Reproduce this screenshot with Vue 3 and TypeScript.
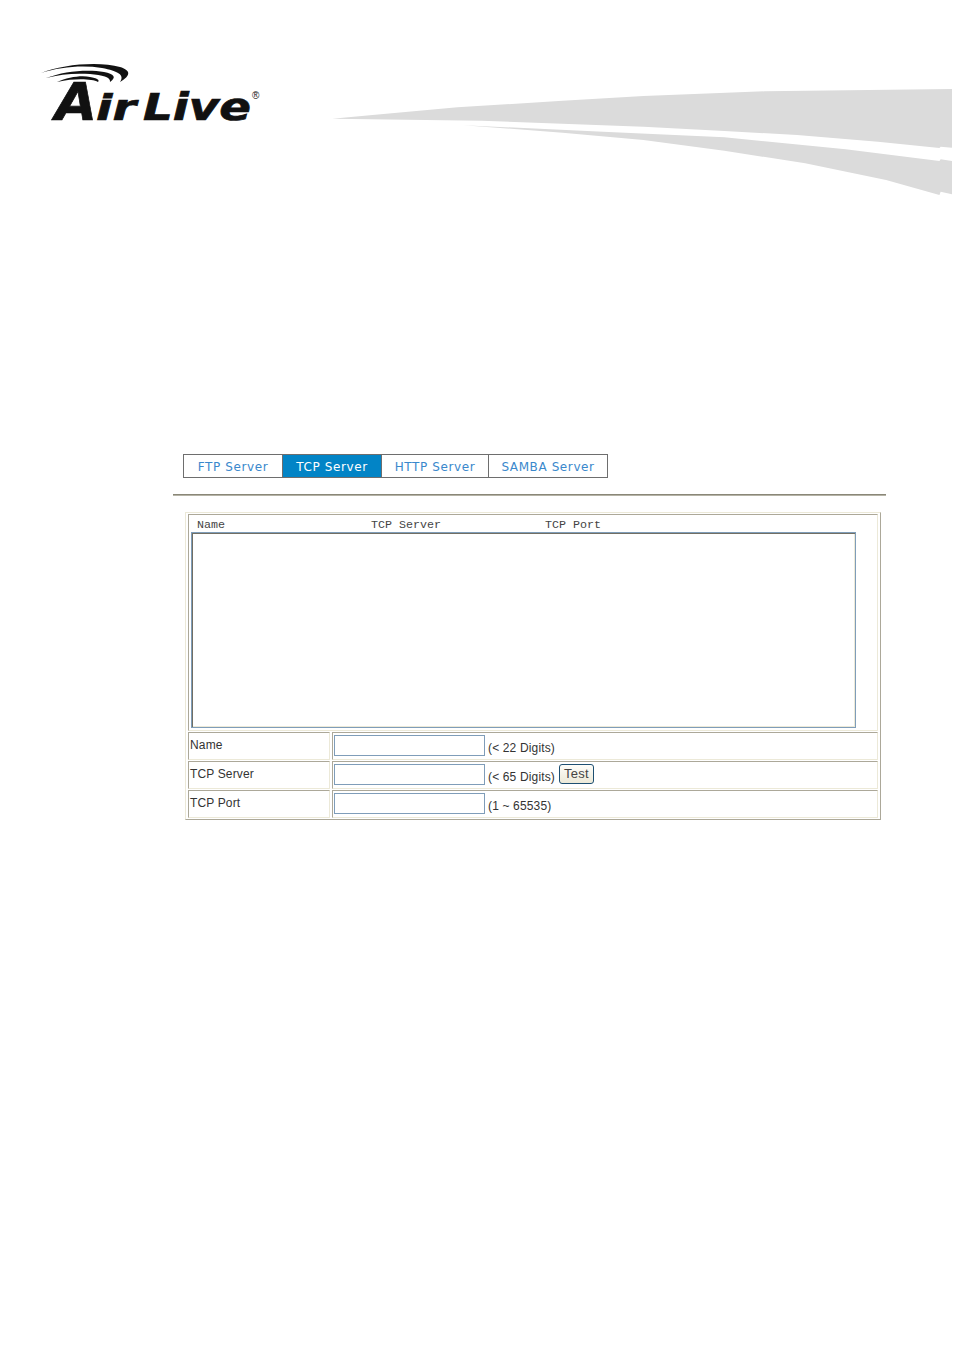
<script setup lang="ts">
const tabs = [
  { label: 'FTP Server', width: 100, active: false },
  { label: 'TCP Server', width: 100, active: true },
  { label: 'HTTP Server', width: 108, active: false },
  { label: 'SAMBA Server', width: 120, active: false },
]
const rows = [
  { label: 'Name', hint: '(< 22 Digits)', test: false },
  { label: 'TCP Server', hint: '(< 65 Digits)', test: true },
  { label: 'TCP Port', hint: '(1 ~ 65535)', test: false },
]
</script>

<template>
  <div class="page">
    <header class="header">
      <svg class="logo" viewBox="0 0 240 90" width="240" height="90" role="img" aria-label="Air Live">
        <path d="M11 23 C32 14 70 11 90 17 C100 20 102 25 90 32 C95 25 88 21 72 18 C52 15 30 17 11 23 Z" />
        <path d="M16 28 C34 21 58 19 74 22 C84 24 87 27 80 32 C81 27 72 25 60 24 C46 23 30 24 16 28 Z" />
        <path d="M27 32 C38 27 52 25 60 27 C67 28 70 30 68 32 C62 29 46 28 27 32 Z" />
        <text class="logo-text a" x="25" y="70" textLength="42" lengthAdjust="spacingAndGlyphs">A</text>
        <text class="logo-text ir" x="66" y="70" textLength="40" lengthAdjust="spacingAndGlyphs">ir</text>
        <text class="logo-text live" x="113" y="70" textLength="108" lengthAdjust="spacingAndGlyphs">Live</text>
        <text class="logo-reg" x="222" y="49">®</text>
      </svg>
      <svg class="swoosh" viewBox="0 0 1568 375" preserveAspectRatio="none" width="634" height="125" aria-hidden="true">
        <path d="M30 116 L130 105 L340 82 L600 62 L800 48 L1100 34 L1563 27 L1563 203 L1535 200 L1532 204 L1380 185 L1180 165 L1000 153 L800 140 L400 122 Z" />
        <path d="M355 136 L700 155 L1000 172 L1300 208 L1532 243 L1535 238 L1563 243 L1563 343 L1535 335 L1532 345 L1400 300 L1200 250 L1000 212 L800 180 L600 158 Z" />
      </svg>
    </header>

    <main class="content">
      <nav class="tabs">
        <a
          v-for="tab in tabs"
          :key="tab.label"
          class="tab"
          :class="{ active: tab.active }"
          :style="{ width: tab.width + 'px' }"
        >{{ tab.label }}</a>
      </nav>

      <div class="rule"></div>

      <section class="panel">
        <div class="list-cell">
          <div class="list-head">
            <span>Name</span>
            <span>TCP Server</span>
            <span>TCP Port</span>
          </div>
          <div class="listbox"></div>
        </div>
        <div v-for="row in rows" :key="row.label" class="row">
          <div class="cell label">{{ row.label }}</div>
          <div class="cell value">
            <input class="field" type="text" />
            <span class="hint">{{ row.hint }}</span>
            <button v-if="row.test" class="test" type="button">Test</button>
          </div>
        </div>
      </section>
    </main>
  </div>
</template>

<style scoped>
.page {
  width: 954px;
  height: 1350px;
  background: #fff;
  overflow: hidden;
}
.header {
  display: flex;
  align-items: flex-start;
  padding: 50px 0 0 30px;
  height: 155px;
  box-sizing: content-box;
}
.logo {
  flex: none;
  fill: #111;
}
.logo-text {
  font-family: "DejaVu Sans", sans-serif;
  font-weight: 700;
  font-style: italic;
  fill: #111;
  stroke: #111;
  stroke-width: 0.7px;
}
.a { font-size: 52px; }
.ir { font-size: 36px; }
.live { font-size: 37px; }
.logo-reg {
  font-family: "Liberation Sans", sans-serif;
  font-size: 10px;
  fill: #111;
}
.swoosh {
  flex: none;
  margin: 30px 0 0 50px;
  fill: #dbdbdb;
}
.content {
  padding: 249px 0 0 173px;
  width: 713px;
}
.tabs {
  display: flex;
  margin-left: 10px;
}
.tab {
  box-sizing: border-box;
  height: 24px;
  line-height: 24px;
  text-align: center;
  border: 1px solid #6e6e6e;
  margin-right: -1px;
  font-family: "DejaVu Sans", sans-serif;
  font-size: 12px;
  letter-spacing: 0.6px;
  color: #3a88cc;
  background: #fff;
}
.tab.active {
  background: #0284c6;
  color: #fff;
}
.rule {
  height: 2px;
  margin-top: 16px;
  background: linear-gradient(#8a8778 50%, #b5b3a6 50%);
}
.panel {
  box-sizing: border-box;
  width: 696px;
  height: 308px;
  margin: 16px 0 0 12px;
  padding: 1px 2px;
  border: 1px solid;
  border-color: #ece9d8 #aca899 #aca899 #ece9d8;
  display: flex;
  flex-direction: column;
  gap: 1px;
}
.list-cell {
  box-sizing: border-box;
  height: 218px;
  padding: 4px 2px 0;
  border: 1px solid;
  border-color: #aca899 #ece9d8 #ece9d8 #aca899;
}
.list-head {
  display: grid;
  grid-template-columns: 174px 174px 1fr;
  padding-left: 6px;
  height: 12px;
  line-height: 12px;
  font-family: "Liberation Mono", monospace;
  font-size: 11.67px;
  color: #444;
}
.listbox {
  box-sizing: border-box;
  width: 665px;
  height: 196px;
  margin-top: 1px;
  border: 1px solid #7f9db9;
  box-shadow: inset 1px 1px 0 #716f64, inset -1px -1px 0 #ece9d8;
  background: #fff;
}
.row {
  display: flex;
  gap: 2px;
  height: 28px;
}
.cell {
  box-sizing: border-box;
  border: 1px solid;
  border-color: #aca899 #ece9d8 #ece9d8 #aca899;
  font-family: "Liberation Sans", sans-serif;
  font-size: 12px;
  letter-spacing: 0.15px;
  color: #333;
}
.label {
  width: 142px;
  padding: 4px 0 0 1px;
  line-height: 16px;
}
.value {
  flex: 1;
  display: flex;
  align-items: flex-start;
  padding: 2px 0 0 1px;
}
.field {
  box-sizing: border-box;
  width: 151px;
  height: 21px;
  margin: 0;
  padding: 0;
  border: 1px solid #7f9db9;
  background: #fff;
}
.hint {
  margin: 5px 0 0 3px;
  line-height: 16px;
}
.test {
  box-sizing: border-box;
  width: 35px;
  height: 20px;
  margin: 0 0 0 4px;
  padding: 0;
  border: 1px solid #1d4f72;
  border-radius: 3px;
  background: linear-gradient(#fdfdfa, #ece9d8);
  font-family: "Liberation Sans", sans-serif;
  font-size: 13px;
  letter-spacing: 0.3px;
  line-height: 16px;
  color: #444;
}
</style>

<style>
html, body { background: #fff; }
</style>
